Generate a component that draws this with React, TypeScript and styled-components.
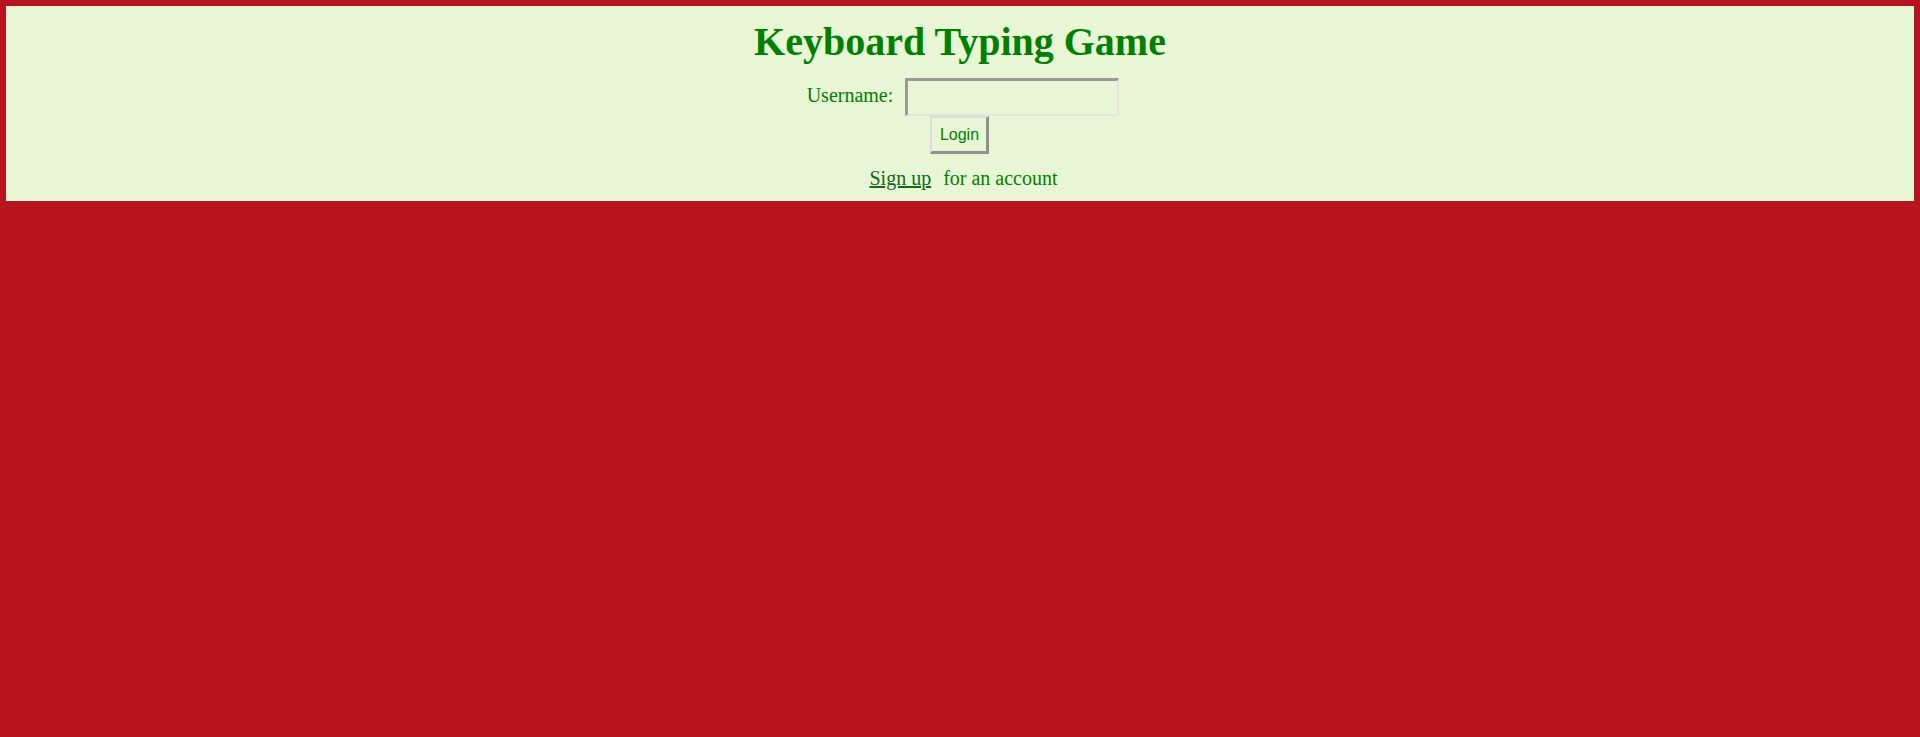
import React from "react";
import styled, { createGlobalStyle } from "styled-components";

const GlobalStyle = createGlobalStyle`
  html, body {
    margin: 0;
    padding: 0;
    background: #b7141f;
  }
  body {
    font-family: "Liberation Serif", "Times New Roman", serif;
  }
  * { box-sizing: border-box; }
`;

const Page = styled.div`
  padding: 6px;
  min-height: 737px;
  background: #b7141f;
`;

const Panel = styled.main`
  background: #e8f6d5;
  height: 195px;
  display: flex;
  flex-direction: column;
  align-items: center;
  padding-top: 12.5px;
  color: #008000;
`;

const Title = styled.h1`
  margin: 0;
  font-family: "Liberation Serif", "Times New Roman", serif;
  font-weight: bold;
  font-size: 40px;
  line-height: 46px;
  color: #008000;
`;

const Form = styled.form`
  display: flex;
  flex-direction: column;
  align-items: center;
  margin-top: 13.5px;
`;

const Row = styled.div`
  display: flex;
  align-items: center;
  gap: 12px;
  padding-left: 6px;
`;

const Label = styled.label`
  font-size: 20px;
  line-height: 23px;
  margin-bottom: 4px;
  color: #008000;
`;

const Input = styled.input`
  width: 214px;
  height: 38px;
  background: transparent;
  border-style: solid;
  border-width: 3px 2px 2px 3px;
  border-color: #999999 #e3e3e3 #e3e3e3 #999999;
  outline: none;
  font-size: 16px;
  padding: 2px 4px;
  margin: 0;
`;

const Button = styled.button`
  height: 38px;
  width: 59px;
  padding: 0;
  margin: 0;
  background: transparent;
  border-style: solid;
  border-width: 2px 3px 3px 2px;
  border-color: #dcdcdc #909090 #909090 #dcdcdc;
  font-family: "Liberation Sans", Arial, sans-serif;
  font-size: 16px;
  color: #008000;
  cursor: pointer;
`;

const SignupLine = styled.p`
  margin: 13px 0 0;
  padding-left: 7px;
  font-size: 20px;
  line-height: 23px;
  color: #008000;
  display: flex;
  gap: 12px;
`;

const SignupLink = styled.a`
  color: #13691a;
  text-decoration: underline;
`;

export default function App() {
  return (
    <>
      <GlobalStyle />
      <Page>
        <Panel>
          <Title>Keyboard Typing Game</Title>
          <Form onSubmit={(e) => e.preventDefault()}>
            <Row>
              <Label htmlFor="username">Username:</Label>
              <Input id="username" type="text" />
            </Row>
            <Button type="submit">Login</Button>
          </Form>
          <SignupLine>
            <SignupLink href="#">Sign up</SignupLink>
            <span>for an account</span>
          </SignupLine>
        </Panel>
      </Page>
    </>
  );
}
